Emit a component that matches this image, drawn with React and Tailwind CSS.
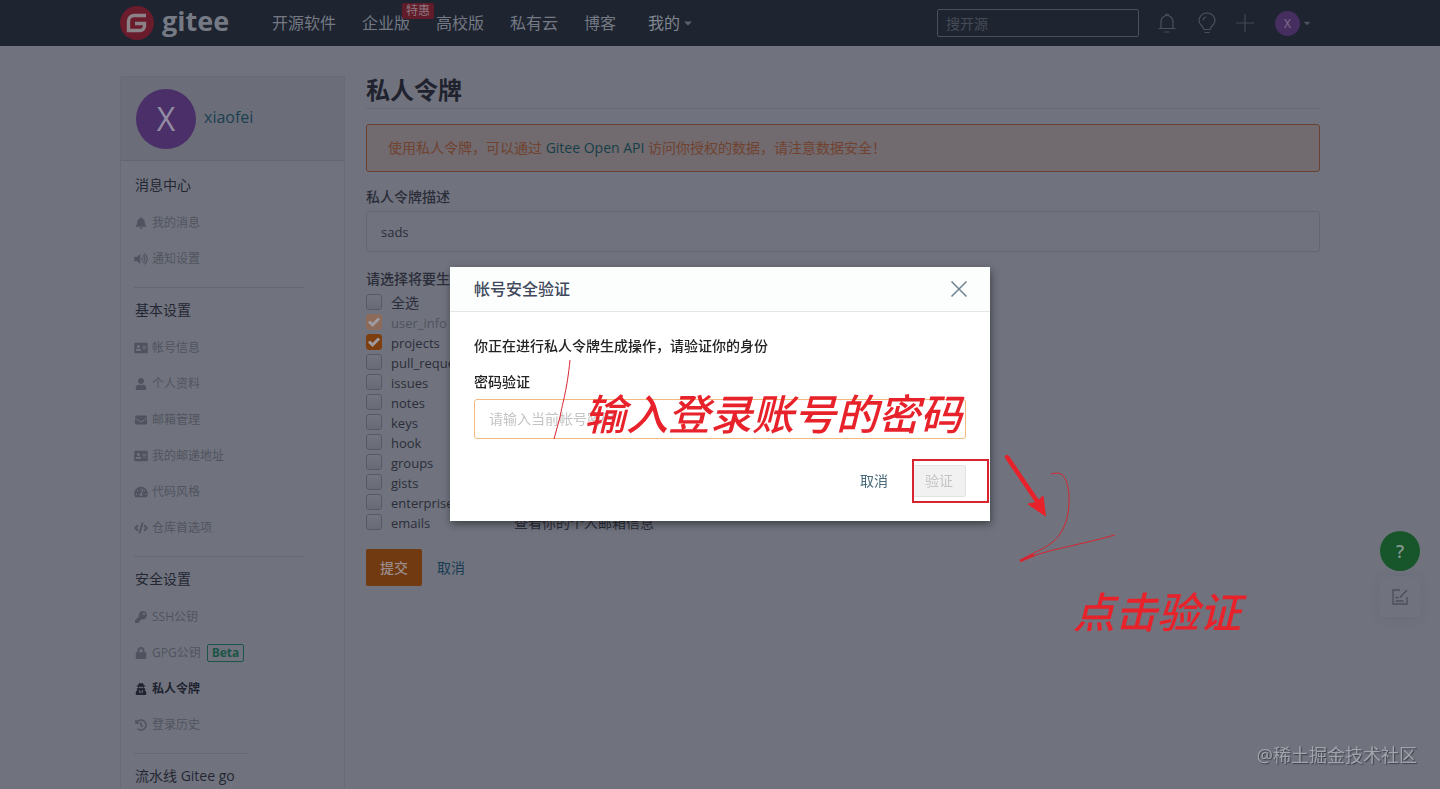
import React from 'react';
import {
  FaBell,
  FaVolumeUp,
  FaAddressCard,
  FaUser,
  FaEnvelope,
  FaTachometerAlt,
  FaCode,
  FaKey,
  FaLock,
  FaUserSecret,
  FaHistory,
  FaCaretDown
} from 'react-icons/fa';

const navLinks = ['开源软件', '企业版', '高校版', '私有云', '博客'];

const menuSections = [
  {
    title: '消息中心',
    items: [
      { label: '我的消息', icon: FaBell },
      { label: '通知设置', icon: FaVolumeUp }
    ]
  },
  {
    title: '基本设置',
    items: [
      { label: '帐号信息', icon: FaAddressCard },
      { label: '个人资料', icon: FaUser },
      { label: '邮箱管理', icon: FaEnvelope },
      { label: '我的邮递地址', icon: FaAddressCard },
      { label: '代码风格', icon: FaTachometerAlt },
      { label: '仓库首选项', icon: FaCode }
    ]
  },
  {
    title: '安全设置',
    items: [
      { label: 'SSH公钥', icon: FaKey },
      { label: 'GPG公钥', icon: FaLock, beta: true },
      { label: '私人令牌', icon: FaUserSecret, active: true },
      { label: '登录历史', icon: FaHistory }
    ]
  },
  { title: '流水线 Gitee go', items: [], short: true }
];

const scopes = [
  { name: 'user_info', checked: true, disabled: true },
  { name: 'projects', checked: true },
  { name: 'pull_requests' },
  { name: 'issues' },
  { name: 'notes' },
  { name: 'keys' },
  { name: 'hook' },
  { name: 'groups' },
  { name: 'gists' },
  { name: 'enterprises' },
  { name: 'emails', description: '查看你的个人邮箱信息' }
];

const Logo = () => (
  <a href="#home" className="flex items-center gap-2 w-[140px] shrink-0" aria-label="gitee">
    <svg viewBox="0 0 34 34" className="size-[34px]">
      <circle cx="17" cy="17" r="17" fill="#6b1c2c" />
      <path
        d="M26 9.500H14a5.500 5.500 0 0 0-5.500 5.500v9.500H20a4.500 4.500 0 0 0 4.500-4.500v-2.500H15"
        fill="none"
        stroke="#8b8288"
        strokeWidth="3.400"
      />
    </svg>
    <span className="text-[27px] leading-8 font-bold text-[#757a85] pb-1">gitee</span>
  </a>
);

const Header = () => (
  <header className="bg-[#1e2430] text-[#747984]">
    <div className="max-w-[1200px] mx-auto h-[46px] flex items-center">
      <Logo />
      <nav className="flex items-center gap-[26px] ml-3 text-base">
        {navLinks.map(link => (
          <a key={link} href="#nav" className="relative whitespace-nowrap">
            {link}
            {link === '企业版' && (
              <span className="absolute -top-2 left-10 px-1 rounded-xs bg-[#611c2a] text-[#8d7a82] text-xs leading-4">
                特惠
              </span>
            )}
          </a>
        ))}
        <a href="#mine" className="flex items-center gap-0.5 ml-1.5 text-[#80858f] whitespace-nowrap">
          我的 <FaCaretDown className="text-xs text-[#5c616c]" />
        </a>
      </nav>
      <div className="ml-auto flex items-center">
        <input
          type="search"
          aria-label="搜开源"
          placeholder="搜开源"
          className="w-[202px] h-7 px-2 rounded-xs border border-[#4b505b] bg-transparent text-sm placeholder:text-[#464c57]"
        />
        <button type="button" aria-label="通知" className="ml-[18px]">
          <svg viewBox="0 0 20 22" className="w-5 h-[22px]" fill="none" stroke="#4a505c" strokeWidth="1.200">
            <path d="M1.500 16.500h17M4 16.500V9.500a6 6 0 0 1 12 0v7M8.500 3.500a1.500 1.500 0 0 1 3 0M7.500 20h5" />
          </svg>
        </button>
        <button type="button" aria-label="动态" className="ml-5">
          <svg viewBox="0 0 20 22" className="w-5 h-[22px]" fill="none" stroke="#4a505c" strokeWidth="1.200">
            <path d="M7 17.500C6.500 14 2 13 2 8.800a8 8 0 0 1 16 0C18 13 13.500 14 13 17.500zM7.500 20.500h5M6 8.500a4 4 0 0 1 3-3.500" />
          </svg>
        </button>
        <button type="button" aria-label="新建" className="ml-[18px]">
          <svg viewBox="0 0 20 20" className="size-5" fill="none" stroke="#434955" strokeWidth="1.200">
            <path d="M1 10h18M10 1v18" />
          </svg>
        </button>
        <button type="button" className="ml-5 mr-2 flex items-center gap-0.5 text-[#4c525e]">
          <span className="size-[25px] rounded-full bg-[#472e61] text-[#83738f] text-xs leading-[25px]">X</span>
          <FaCaretDown className="text-[10px]" />
        </button>
      </div>
    </div>
  </header>
);

const MenuItem = ({ item }) => {
  const Icon = item.icon;
  return (
    <li>
      <a
        href="#menu"
        className={`h-9 flex items-center text-xs ${item.active ? 'font-bold text-[#20232f]' : 'text-[#50535f]'}`}
      >
        <Icon className="w-3.5 h-3 mr-1" />
        {item.label}
        {item.beta && (
          <span className="ml-1.5 px-1 border border-[#1c5546] rounded-xs text-[#1c5546] font-bold leading-4">
            Beta
          </span>
        )}
      </a>
    </li>
  );
};

const Sidebar = () => (
  <aside className="w-[225px] shrink-0 mt-[30px] border border-[#686b76]">
    <div className="h-[84px] px-[15px] flex items-center gap-2 bg-[#6b6e79] border-b border-[#636671]">
      <span className="size-[60px] rounded-full bg-[#4a2f68] text-[#918aa0] text-[32px] leading-[60px] text-center">X</span>
      <a href="#profile" className="pb-1 text-base text-[#1b4050]">xiaofei</a>
    </div>
    <div className="pt-[5px] pl-[13px] pb-10">
      {menuSections.map((section, index) => (
        <section key={section.title}>
          {index > 0 && (
            <hr className={`mt-2.5 mb-[3px] border-[#656873] ${section.short ? 'w-[115px]' : 'w-[170px]'}`} />
          )}
          <h2 className="h-[38px] mb-px pl-px leading-[38px] text-sm text-[#242733]">{section.title}</h2>
          <ul>
            {section.items.map(item => (
              <MenuItem key={item.label} item={item} />
            ))}
          </ul>
        </section>
      ))}
    </div>
  </aside>
);

const Checkbox = props => (
  <span className="grid mb-0.5">
    <input
      type="checkbox"
      className="peer col-start-1 row-start-1 size-4 appearance-none rounded-[3px] border border-[#575a65] bg-linear-to-b from-[#72757f] to-[#686b76] checked:border-[#7d3f10] checked:bg-none checked:bg-[#7d3f10] disabled:border-[#8d6b5a] disabled:bg-[#8d6b5a]"
      {...props}
    />
    <svg
      viewBox="0 0 16 16"
      className="col-start-1 row-start-1 size-4 hidden peer-checked:block pointer-events-none"
      fill="none"
      stroke="#9f9ba1"
      strokeWidth="3"
    >
      <path d="M3 7.500l3.500 3.500L13 4.500" />
    </svg>
  </span>
);

const ScopeRow = ({ scope }) => (
  <div className="flex h-5 items-center">
    <label
      className={`flex items-center gap-[9px] w-[148px] text-[13px] ${scope.disabled ? 'text-[#4f525d]' : 'text-[#2b2d39]'}`}
    >
      <Checkbox defaultChecked={scope.checked} disabled={scope.disabled} />
      {scope.name}
    </label>
    {scope.description && <span>{scope.description}</span>}
  </div>
);

const TokenForm = () => (
  <main className="flex-1 min-w-0 pt-[30px] text-sm text-[#2b2d39]">
    <h1 className="text-2xl leading-7 font-bold text-[#20222e] pb-1 border-b border-[#666974]">私人令牌</h1>
    <div className="mt-[15px] px-[21px] py-[13px] rounded-[3px] border border-[#6b4030] bg-[#716a6f] text-[#70422f] leading-5">
      使用私人令牌，可以通过 <a href="#api" className="text-[#154047]">Gitee Open API</a> 访问你授权的数据，请注意数据安全！
    </div>
    <form onSubmit={e => e.preventDefault()}>
      <label htmlFor="token-desc" className="block mt-[15px] leading-5 font-medium">私人令牌描述</label>
      <input
        id="token-desc"
        type="text"
        defaultValue="sads"
        className="mt-1 w-full h-[41px] px-3.5 rounded-[3px] border border-[#646772] text-[13px]"
      />
      <fieldset className="mt-[17px]">
        <legend className="leading-5 font-medium mb-1">请选择将要生成</legend>
        <label className="flex h-5 w-[148px] items-center gap-[9px]">
          <Checkbox />
          全选
        </label>
        {scopes.map(scope => (
          <ScopeRow key={scope.name} scope={scope} />
        ))}
      </fieldset>
      <div className="mt-4 flex items-center gap-[15px]">
        <button type="submit" className="h-[37px] px-3.5 rounded-xs bg-[#713a10] text-[#9a8c8c] font-medium">提交</button>
        <a href="#cancel" className="text-[#173c53]">取消</a>
      </div>
    </form>
  </main>
);

// Hand-drawn notes, in the dialog's own coordinates
const Annotations = () => (
  <div className="absolute inset-0 pointer-events-none text-[#e8222a] text-[42px] leading-[48px] font-medium italic whitespace-nowrap">
    <svg viewBox="0 0 540 254" className="absolute inset-0 size-full overflow-visible" fill="none" stroke="#d8242f">
      <path d="M120 93C117 123 113 134 110 150L104 172" />
      <rect x="463" y="193" width="75" height="42" strokeWidth="2" />
      <path d="M557 190L589 237" stroke="#e8222a" strokeWidth="4.500" strokeLinecap="round" />
      <path d="M595.500 249L578 237L586 235.500L593 229z" fill="#e8222a" stroke="#e8222a" />
      <path d="M601 207C612 204 617 208 619 228C620 253 612 269 600 277C594 282 582 286 571 293" />
      <path d="M570 294C594 283 626 279 665 268" />
      <path d="M570 294L584 288" strokeWidth="2.500" />
    </svg>
    <span className="absolute left-[134px] top-[123px]">输入登录账号的密码</span>
    <span className="absolute left-[623px] top-[321px]">点击验证</span>
  </div>
);

const VerifyDialog = () => (
  <div className="fixed inset-0 pb-0.5 flex items-center justify-center">
    <div
      role="dialog"
      aria-labelledby="verify-title"
      className="relative w-full max-w-[540px] bg-white text-sm text-[#222] shadow-[1px_3px_8px_rgba(0,0,0,0.45)]"
    >
      <div className="h-[45px] px-6 flex items-center justify-between bg-[#fcfdfd] border-b border-[#e3e6e8]">
        <h2 id="verify-title" className="text-base font-medium text-[#40485b]">帐号安全验证</h2>
        <button type="button" aria-label="关闭" className="-mr-0.5">
          <svg viewBox="0 0 18 18" className="size-[18px]" fill="none" stroke="#6f8492" strokeWidth="1.500">
            <path d="M1.500 1.500l15 15M16.500 1.500l-15 15" />
          </svg>
        </button>
      </div>
      <form className="p-6" onSubmit={e => e.preventDefault()}>
        <p className="leading-5 font-medium">你正在进行私人令牌生成操作，请验证你的身份</p>
        <label htmlFor="password" className="block mt-4 leading-5 font-medium">密码验证</label>
        <input
          id="password"
          type="password"
          placeholder="请输入当前帐号密码"
          className="mt-[7px] w-full h-10 px-3.5 rounded-[3px] border border-[#f3b87c] placeholder:text-[#c4c4c4]"
        />
        <div className="mt-[26px] flex items-center justify-end gap-6">
          <button type="button" className="text-[#48697a]">取消</button>
          <button type="submit" disabled className="h-8 px-3 border border-[#e3e3e3] rounded-xs bg-[#f1f1f1] text-[#c5c5c5]">验证</button>
        </div>
      </form>
      <Annotations />
    </div>
  </div>
);

const FloatingTools = () => (
  <div className="fixed right-5 bottom-[172px] flex flex-col gap-1.5">
    <button type="button" aria-label="帮助" className="size-10 rounded-full bg-[#17562a] text-[#83958d] text-lg font-semibold">
      ?
    </button>
    <button type="button" aria-label="反馈" className="size-10 flex items-center justify-center rounded-xs shadow-[0_2px_10px_rgba(60,62,75,0.12)]">
      <svg viewBox="0 0 16 16" className="size-4" fill="none" stroke="#4b4e59" strokeWidth="1.300">
        <path d="M8 1H1v14h14V8M3.500 12h8M3.500 8.500h3M8 8.500L15 1" />
      </svg>
    </button>
  </div>
);

const App = () => (
  <div className="h-screen overflow-hidden bg-[#70737e] font-['Open_Sans','Noto_Sans_CJK_SC',sans-serif]">
    <Header />
    <div className="max-w-[1200px] mx-auto flex gap-[21px]">
      <Sidebar />
      <TokenForm />
    </div>
    <FloatingTools />
    <VerifyDialog />
    <div className="fixed right-[23px] bottom-5 text-lg leading-7 text-[#a2a4ab] [text-shadow:1px_1px_1px_#3e414b]">
      @稀土掘金技术社区
    </div>
  </div>
);

export default App;
